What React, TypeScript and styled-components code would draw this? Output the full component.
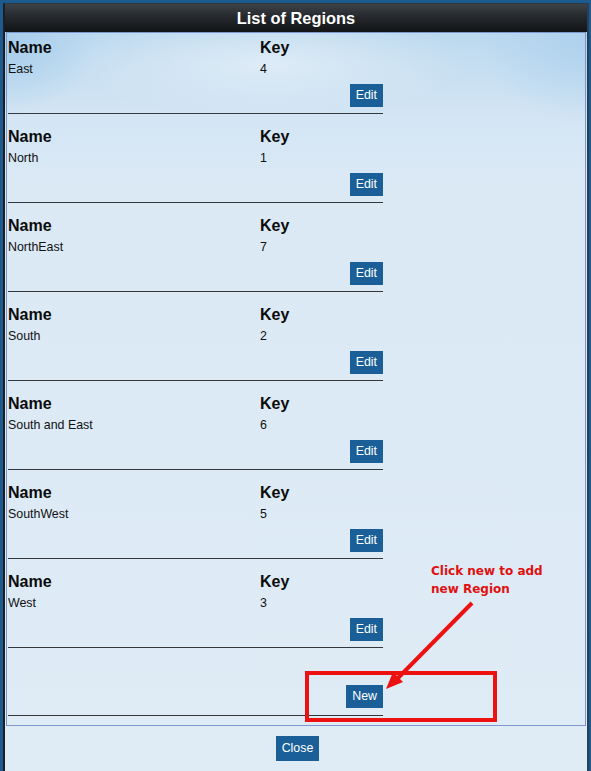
import styled, { createGlobalStyle } from 'styled-components';

const GlobalStyle = createGlobalStyle`
  html, body {
    margin: 0;
    padding: 0;
    background: #1d5b8f;
  }
`;

type Region = { name: string; key: number };

const regions: Region[] = [
  { name: 'East', key: 4 },
  { name: 'North', key: 1 },
  { name: 'NorthEast', key: 7 },
  { name: 'South', key: 2 },
  { name: 'South and East', key: 6 },
  { name: 'SouthWest', key: 5 },
  { name: 'West', key: 3 },
];

const Page = styled.div`
  position: relative;
  width: 591px;
  height: 771px;
  padding: 3px 2px 0 3px;
  box-sizing: border-box;
  background: #1d5b8f;
  overflow: hidden;
  font-family: 'Liberation Sans', Arial, sans-serif;
`;

const Dialog = styled.div`
  height: 768px;
  display: flex;
  flex-direction: column;
  border-left: 2px solid #1b1e22;
  border-right: 2px solid #2a3f55;
  border-top: 1px solid #2c3a48;
  background:
    radial-gradient(ellipse 200px 50px at 45% 60px, rgba(226, 238, 247, 0.85), rgba(226, 238, 247, 0) 100%),
    radial-gradient(ellipse 90px 70px at 0% 40px, rgba(160, 202, 234, 0.8), rgba(160, 202, 234, 0) 100%),
    radial-gradient(ellipse 110px 80px at 100% 40px, rgba(168, 206, 236, 0.7), rgba(168, 206, 236, 0) 100%),
    linear-gradient(to bottom, #b2d4ed 0px, #c2dcf0 50px, #d3e5f4 110px, #dbe9f5 180px, #dfecf6 100%);
`;

const Header = styled.div`
  height: 28px;
  flex: none;
  display: flex;
  align-items: center;
  justify-content: center;
  background: linear-gradient(to bottom, #3e4347 0%, #25292d 45%, #121416 100%);
  color: #ffffff;
  font-size: 16.4px;
  font-weight: bold;
`;

const Panel = styled.div`
  height: 694px;
  flex: none;
  margin: 0 1px 0 1px;
  box-sizing: border-box;
  border: 1px solid #7d97cf;
  padding: 1px 0 0 1px;
`;

const List = styled.div`
  width: 375px;
`;

const Item = styled.div`
  padding-top: 4px;
  border-bottom: 1px solid #33383d;
  margin-bottom: 9px;
`;

const Row = styled.div`
  display: grid;
  grid-template-columns: 252px 1fr;
`;

const Label = styled.div`
  font-size: 16px;
  font-weight: bold;
  line-height: 20px;
  color: #0b0b0b;
`;

const Value = styled.div`
  font-size: 12.4px;
  line-height: 16px;
  margin-top: 3px;
  color: #111;
`;

const Actions = styled.div<{ $top: number; $bottom: number }>`
  display: flex;
  justify-content: flex-end;
  padding: ${(p) => p.$top}px 0 ${(p) => p.$bottom}px;
`;

const Button = styled.button<{ $h?: number }>`
  height: ${(p) => p.$h ?? 23}px;
  padding: 0 6px;
  border: 0;
  border-radius: 0;
  background: #1a5f98;
  color: #ffffff;
  font-family: 'Liberation Sans', Arial, sans-serif;
  font-size: 12.4px;
  line-height: ${(p) => p.$h ?? 23}px;
  cursor: pointer;
`;

const NewBlock = styled.div`
  padding-top: 28px;
  border-bottom: 1px solid #33383d;
`;

const Footer = styled.div`
  flex: 1;
  display: flex;
  justify-content: center;
  align-items: flex-start;
  padding-top: 10px;
  padding-left: 3px;
`;

const Note = styled.div`
  position: absolute;
  left: 431px;
  top: 562px;
  color: #e01010;
  font-family: 'DejaVu Sans', Verdana, sans-serif;
  font-size: 12px;
  font-weight: bold;
  line-height: 18px;
`;

const Highlight = styled.div`
  position: absolute;
  left: 305px;
  top: 671px;
  width: 192px;
  height: 51px;
  box-sizing: border-box;
  border: 4px solid #ee1111;
`;

const Arrow = styled.svg`
  position: absolute;
  left: 0;
  top: 0;
  pointer-events: none;
`;

export default function App() {
  return (
    <>
      <GlobalStyle />
      <Page>
        <Dialog>
          <Header>List of Regions</Header>
          <Panel>
            <List>
              {regions.map((r) => (
                <Item key={r.name}>
                  <Row>
                    <Label>Name</Label>
                    <Label>Key</Label>
                  </Row>
                  <Row>
                    <Value>{r.name}</Value>
                    <Value>{r.key}</Value>
                  </Row>
                  <Actions $top={7} $bottom={6}>
                    <Button>Edit</Button>
                  </Actions>
                </Item>
              ))}
              <NewBlock>
                <Actions $top={0} $bottom={7}>
                  <Button>New</Button>
                </Actions>
              </NewBlock>
            </List>
          </Panel>
          <Footer>
            <Button $h={25}>Close</Button>
          </Footer>
        </Dialog>
        <Note>
          Click new to add
          <br />
          new Region
        </Note>
        <Highlight />
        <Arrow width="591" height="771" viewBox="0 0 591 771">
          <line x1="472" y1="603" x2="397" y2="679" stroke="#ee1111" strokeWidth="4" />
          <polygon points="386,689 393,672 403,682" fill="#ee1111" />
        </Arrow>
      </Page>
    </>
  );
}
